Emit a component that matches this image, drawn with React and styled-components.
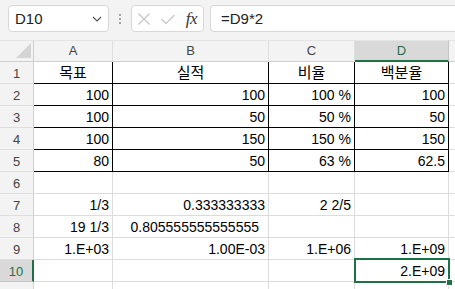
import React from 'react';
import styled, { createGlobalStyle } from 'styled-components';

const GREEN = '#1e7145';
const GRID = '#dcdcdc';

const Global = createGlobalStyle`
  html, body {
    margin: 0;
    padding: 0;
    background: #fff;
    overflow: hidden;
  }
  body {
    font-family: "Liberation Sans", "Noto Sans CJK KR", sans-serif;
    color: #000;
  }
`;

const Page = styled.div`
  width: 455px;
  height: 289px;
  overflow: hidden;
`;

const Toolbar = styled.div`
  height: 40px;
  box-sizing: border-box;
  background: #f3f3f3;
  padding: 5px 0 0 8px;
  display: flex;
  align-items: flex-start;
`;

const Box = styled.div`
  height: 27px;
  box-sizing: border-box;
  background: #fff;
  border: 1px solid #d8d8d8;
  border-radius: 4px;
  display: flex;
  align-items: center;
`;

const NameBox = styled(Box)`
  width: 101px;
  padding: 0 6px 0 6px;
  justify-content: space-between;
  font-size: 15px;
  color: #222;
`;

const Dots = styled.div`
  width: 22px;
  height: 27px;
  display: flex;
  flex-direction: column;
  align-items: center;
  justify-content: center;
  gap: 2px;

  span {
    width: 2px;
    height: 2px;
    border-radius: 50%;
    background: #8a8a8a;
  }
`;

const Buttons = styled(Box)`
  width: 73px;
  padding: 0 4px 0 5px;
  justify-content: space-between;
`;

const Fx = styled.span`
  font-family: "Liberation Serif", "DejaVu Serif", serif;
  font-style: italic;
  font-size: 17px;
  color: #333;
  margin-right: 2px;
  letter-spacing: -0.5px;
`;

const Formula = styled(Box)`
  flex: 1;
  margin-left: 6px;
  border-right: none;
  border-radius: 4px 0 0 4px;
  padding-left: 10px;
  font-size: 15px;
  color: #222;
`;

const Sheet = styled.div`
  display: grid;
  grid-template-columns: 34px 79px 156px 86px 94px 1fr;
  grid-template-rows: 22px;
  grid-auto-rows: 22px;
  font-size: 14px;
`;

const Corner = styled.div`
  background: #f3f3f3;
  border-top: 1px solid #e4e4e4;
  border-right: 1px solid #cfcfcf;
  border-bottom: 1px solid #cfcfcf;
  box-sizing: border-box;
  display: flex;
  align-items: flex-end;
  justify-content: flex-end;
  padding: 0 2px 3px 0;
`;

const ColHead = styled.div`
  box-sizing: border-box;
  background: ${p => (p.$active ? '#d9d9d9' : '#f3f3f3')};
  border-top: 1px solid #e4e4e4;
  border-right: 1px solid ${p => (p.$active ? '#c4c4c4' : '#dedede')};
  border-bottom: ${p => (p.$active ? `2px solid ${GREEN}` : '1px solid #cfcfcf')};
  color: ${p => (p.$active ? GREEN : '#444')};
  font-size: 13px;
  display: flex;
  align-items: center;
  justify-content: center;
  padding-bottom: ${p => (p.$active ? '0' : '1px')};
`;

const RowHead = styled.div`
  box-sizing: border-box;
  background: ${p => (p.$active ? '#d9d9d9' : '#f3f3f3')};
  border-right: ${p => (p.$active ? `2px solid ${GREEN}` : '1px solid #cfcfcf')};
  border-bottom: 1px solid ${p => (p.$active ? '#c4c4c4' : '#dedede')};
  color: ${p => (p.$active ? GREEN : '#444')};
  font-size: 13px;
  display: flex;
  align-items: center;
  justify-content: center;
  padding-top: 1px;
`;

const Cell = styled.div`
  position: relative;
  box-sizing: border-box;
  border-right: 1px solid ${p => (p.$boxed ? '#000' : GRID)};
  border-bottom: 1px solid ${p => (p.$boxed ? '#000' : GRID)};
  text-align: ${p => p.$align};
  font-size: ${p => (p.$title ? '15px' : '14px')};
  padding: 0 ${p => p.$pad}px 0 3px;
  line-height: 22px;
  white-space: nowrap;
  overflow: visible;
  z-index: ${p => (p.$selected ? 2 : 'auto')};
`;

const Selection = styled.div`
  position: absolute;
  top: -2px;
  left: -1px;
  right: -2px;
  bottom: -2px;
  border: 2px solid ${GREEN};
  pointer-events: none;
`;

const Handle = styled.div`
  position: absolute;
  right: -5px;
  bottom: -5px;
  width: 5px;
  height: 5px;
  background: ${GREEN};
  border: 1px solid #fff;
`;

const cols = ['A', 'B', 'C', 'D'];

const rows = [
  ['목표', '실적', '비율', '백분율'],
  ['100', '100', '100 %', '100'],
  ['100', '50', '50 %', '50'],
  ['100', '150', '150 %', '150'],
  ['80', '50', '63 %', '62.5'],
  ['', '', '', ''],
  ['1/3', '0.333333333', '2 2/5', ''],
  ['19 1/3', '0.805555555555555', '', ''],
  ['1.E+03', '1.00E-03', '1.E+06', '1.E+09'],
  ['', '', '', '2.E+09'],
  ['', '', '', ''],
];

export default function App() {
  return (
    <Page>
      <Global />
      <Toolbar>
        <NameBox>
          <span>D10</span>
          <svg width="10" height="6" viewBox="0 0 10 6">
            <path d="M1 1 L5 5 L9 1" fill="none" stroke="#555" strokeWidth="1.2" />
          </svg>
        </NameBox>
        <Dots>
          <span />
          <span />
          <span />
        </Dots>
        <Buttons>
          <svg width="14" height="14" viewBox="0 0 14 14">
            <path d="M1.5 1.5 L12.5 12.5 M12.5 1.5 L1.5 12.5" stroke="#c4c4c4" strokeWidth="1.2" />
          </svg>
          <svg width="16" height="14" viewBox="0 0 16 14">
            <path d="M1.5 7 L6 11.5 L14.5 3" fill="none" stroke="#c4c4c4" strokeWidth="1.2" />
          </svg>
          <Fx>fx</Fx>
        </Buttons>
        <Formula>=D9*2</Formula>
      </Toolbar>
      <Sheet>
        <Corner>
          <svg width="15" height="15" viewBox="0 0 15 15">
            <polygon points="15,0 15,15 0,15" fill="#d4d4d4" />
          </svg>
        </Corner>
        {cols.map(c => (
          <ColHead key={c} $active={c === 'D'}>{c}</ColHead>
        ))}
        <ColHead />
        {rows.map((r, i) => (
          <React.Fragment key={i}>
            <RowHead $active={i === 9}>{i < 10 ? i + 1 : ''}</RowHead>
            {r.map((v, j) => {
              const selected = i === 9 && j === 3;
              return (
                <Cell
                  key={j}
                  $boxed={i < 5}
                  $title={i === 0}
                  $align={i === 0 ? 'center' : 'right'}
                  $pad={i === 7 && j === 1 ? 9 : 3}
                  $selected={selected}
                >
                  {v}
                  {selected && (
                    <Selection>
                      <Handle />
                    </Selection>
                  )}
                </Cell>
              );
            })}
            <Cell $align="right" $pad={3} />
          </React.Fragment>
        ))}
      </Sheet>
    </Page>
  );
}
